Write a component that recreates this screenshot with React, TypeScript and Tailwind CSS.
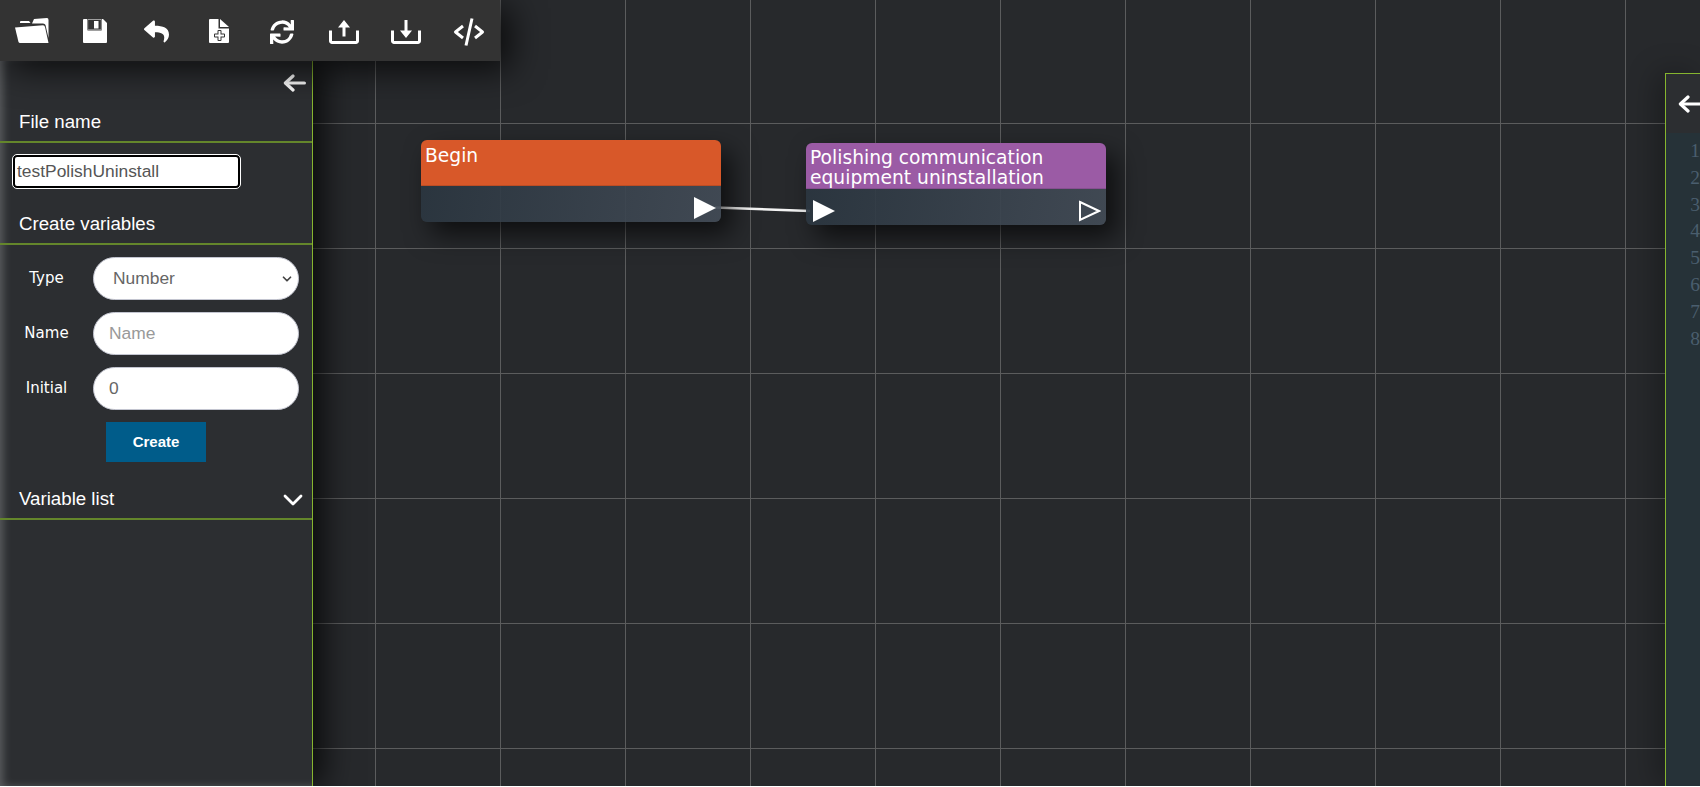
import { BiCodeAlt, BiDownload, BiUpload } from "react-icons/bi";
import { FaReply, FaSync } from "react-icons/fa";
import { ChevronDown } from "lucide-react";

const FolderIcon = () => (
  <svg width="34" height="26" viewBox="0 0 34 26" className="text-white" fill="currentColor">
    <path d="M5 5 L5 3.5 Q5 3 6 3 L14 3 L15.5 5 Z" />
    <path d="M19 1 L32 0 Q33.5 0 33.5 2 L33.5 20 L30.5 7 Q30 5.5 28 5.5 L17 5.5 Z" />
    <path d="M0 9.5 L28 7.3 Q29.5 7.2 30 9 L33.5 25 L5 25 Q4 25 3.5 24 Z" />
  </svg>
);

const SaveIcon = () => (
  <svg width="24" height="24" viewBox="0 0 24 24" fill="currentColor" className="text-white">
    <path fillRule="evenodd" d="M1 0 H20 L24 4 V23 Q24 24 23 24 H1 Q0 24 0 23 V1 Q0 0 1 0 Z M4 0 V10 Q4 11.5 5.5 11.5 H18 Q19 11.5 19 10 V0 Z" />
    <path d="M4.7 0.5 H18.3 V10.8 H4.7 Z" fill="none" stroke="#bbb" strokeWidth="0.8" />
    <rect x="11" y="2" width="4.5" height="7.5" />
  </svg>
);

const NewFileIcon = () => (
  <svg width="20" height="24" viewBox="0 0 20 24" fill="currentColor" className="text-white">
    <path d="M11 0 L20 8 H11 Z" />
    <path
      fillRule="evenodd"
      d="M1 0 H9.5 V9.5 H20 V23 Q20 24 19 24 H1 Q0 24 0 23 V1 Q0 0 1 0 Z M8.5 12 V14.5 H6 Q5 14.5 5 15.5 V17.5 Q5 18.5 6 18.5 H8.5 V21 Q8.5 22 9.5 22 H11.5 Q12.5 22 12.5 21 V18.5 H15 Q16 18.5 16 17.5 V15.5 Q16 14.5 15 14.5 H12.5 V12 Q12.5 11 11.5 11 H9.5 Q8.5 11 8.5 12 Z"
    />
    <path d="M9.5 12 H11.5 V15.5 H15 V17.5 H11.5 V21 H9.5 V17.5 H6 V15.5 H9.5 Z" />
  </svg>
);

const BackArrow = () => (
  <svg width="23" height="18" viewBox="0 0 23 18" fill="none" stroke="#fff" strokeWidth="3.2" strokeLinecap="round" strokeLinejoin="round" className="shrink-0">
    <path d="M21.4 9 H3" />
    <path d="M10 2 L2.4 9 L10 16" />
  </svg>
);

const Heading = ({ title, children }: { title: string; children?: React.ReactNode }) => (
  <div className="flex h-[38px] items-center justify-between border-b-2 border-[#64862b] pb-[1px] pl-[19px] pr-[3px] text-[18.7px] text-white">
    <span>{title}</span>
    {children}
  </div>
);

const FieldRow = ({ label, children }: { label: string; children: React.ReactNode }) => (
  <div className="flex items-center">
    <label className="w-[93px] text-center font-['DejaVu_Sans',sans-serif] text-[15px] text-white">{label}</label>
    {children}
  </div>
);

const fieldClass =
  "h-[43px] w-[206px] rounded-[22px] border border-[#c3c5d0] bg-white pl-[15px] text-[17.4px] text-[#666] placeholder:text-[#999] outline-none";

const Node = ({
  title,
  headerClass,
  className,
  input,
  hollowOutput,
}: {
  title: string;
  headerClass: string;
  className: string;
  input?: boolean;
  hollowOutput?: boolean;
}) => (
  <div className={`absolute z-10 w-[300px] overflow-hidden rounded-[6px] font-['DejaVu_Sans',sans-serif] shadow-[10px_12px_26px_rgba(0,0,0,0.65)] ${className}`}>
    <div className={`h-[46px] border-b border-[#0000001f] px-[4px] text-[18.7px] leading-[20px] text-white ${headerClass}`}>{title}</div>
    <div className="flex h-[36px] items-center justify-between bg-[linear-gradient(100deg,rgba(43,54,64,0.93),rgba(66,75,86,0.93))] pl-[7px] pr-[5px] pt-[7px]">
      {input ? (
        <svg width="22" height="22" viewBox="0 0 22 22">
          <path d="M0 0 L22 11 L0 22 Z" fill="#fff" />
        </svg>
      ) : (
        <span />
      )}
      {hollowOutput ? (
        <svg width="22" height="22" viewBox="0 0 22 22">
          <path d="M1 2 L20 11 L1 20 Z" fill="none" stroke="#fff" strokeWidth="2" />
        </svg>
      ) : (
        <svg width="22" height="22" viewBox="0 0 22 22">
          <path d="M0 0 L22 11 L0 22 Z" fill="#fff" />
        </svg>
      )}
    </div>
  </div>
);

export default function App() {
  const lines = [1, 2, 3, 4, 5, 6, 7, 8];

  return (
    <div className="relative flex h-[786px] w-full overflow-hidden bg-[#27292c] bg-[linear-gradient(to_right,#5b5c5d_1px,transparent_1px),linear-gradient(to_bottom,#5b5c5d_1px,transparent_1px)] bg-[size:125px_125px] bg-[position:0px_-2px] font-['Liberation_Sans',Arial,sans-serif]">
      {/* link between the two nodes, it runs under the nodes */}
      <svg className="absolute left-[700px] top-[200px]" width="120" height="20">
        <line x1="15" y1="7.5" x2="110" y2="11" stroke="#f4f4f4" strokeWidth="2.6" />
      </svg>

      <Node title="Begin" headerClass="bg-[#d85829] pt-[6px]" className="left-[421px] top-[140px]" />
      <Node
        title="Polishing communication equipment uninstallation"
        headerClass="bg-[#9b5ba5] pt-[5px]"
        className="left-[806px] top-[143px]"
        input
        hollowOutput
      />

      <div className="relative z-20 flex h-full w-[500px] flex-col">
        <div className="relative z-10 flex h-[61px] w-[500px] items-center bg-[#333333] pl-[1px] text-white shadow-[10px_8px_34px_rgba(0,0,0,0.75)]">
          <div className="flex w-[62.5px] justify-center"><FolderIcon /></div>
          <div className="flex w-[62.5px] justify-center"><SaveIcon /></div>
          <div className="flex w-[62.5px] justify-center pt-[2px]"><FaReply size={25} /></div>
          <div className="flex w-[62.5px] justify-center"><NewFileIcon /></div>
          <div className="flex w-[62.5px] justify-center pt-[2px]"><FaSync size={24} /></div>
          <div className="flex w-[62.5px] justify-center pt-[2px]"><BiUpload size={36} /></div>
          <div className="flex w-[62.5px] justify-center pt-[2px]"><BiDownload size={36} /></div>
          <div className="flex w-[62.5px] justify-center pt-[2px]"><BiCodeAlt size={36} /></div>
        </div>

        <aside className="flex w-[313px] flex-1 flex-col border-r border-[#86b52f] bg-[#2c2e31] shadow-[inset_6px_-2px_8px_-3px_#5b5d60,10px_0_30px_rgba(0,0,0,0.75)]">
          <div className="flex h-[44px] items-center justify-end pr-[6px] text-white">
            <BackArrow />
          </div>
          <Heading title="File name" />
          <div className="h-[64px] pl-[13px] pt-[12px]">
            <input
              defaultValue="testPolishUninstall"
              className="h-[33px] w-[227px] rounded-[4px] border-2 border-black bg-white pl-[2px] text-[17.4px] text-[#555] outline outline-1 outline-white"
            />
          </div>
          <Heading title="Create variables" />
          <div className="flex flex-col gap-[12px] pt-[12px]">
            <FieldRow label="Type">
              <div className="relative">
                <select className={`${fieldClass} appearance-none pl-[19px]`} defaultValue="Number">
                  <option>Number</option>
                  <option>String</option>
                </select>
                <ChevronDown size={14} strokeWidth={3} className="absolute right-[5px] top-[15px] text-[#444]" />
              </div>
            </FieldRow>
            <FieldRow label="Name">
              <input placeholder="Name" className={fieldClass} />
            </FieldRow>
            <FieldRow label="Initial">
              <input defaultValue="0" className={fieldClass} />
            </FieldRow>
          </div>
          <button className="ml-[106px] mt-[12px] h-[40px] w-[100px] bg-[#005c8a] pt-[1px] text-[15px] font-bold text-white">Create</button>
          <div className="mt-[20px]">
            <Heading title="Variable list">
              <ChevronDown size={32} strokeWidth={2.1} />
            </Heading>
          </div>
        </aside>
      </div>

      <aside className="relative z-20 ml-auto mt-[73px] flex w-[35px] flex-col border-l border-t border-[#86b52f] shadow-[-8px_0_30px_rgba(0,0,0,0.3)]">
        <div className="flex h-[59px] items-center bg-[#2c2e31] pl-[12px] text-white">
          <BackArrow />
        </div>
        <div className="flex-1 overflow-hidden bg-[#263238] pt-[5px] text-right font-['Liberation_Serif',serif] text-[19.5px] leading-[26.8px] text-[#4a5e6e]">
          {lines.map((n) => (
            <div key={n}>{n}</div>
          ))}
        </div>
      </aside>
    </div>
  );
}
